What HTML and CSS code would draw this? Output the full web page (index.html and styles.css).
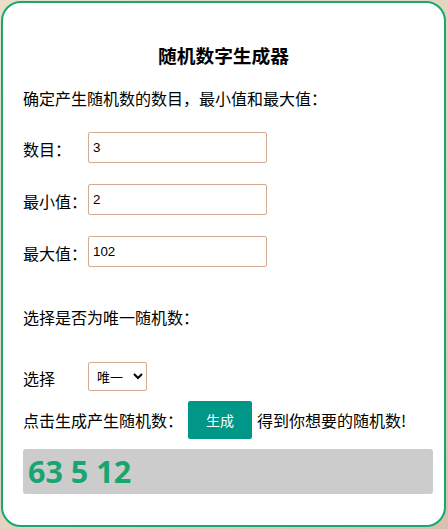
FILE: index.html
```html
<!DOCTYPE html>
<html lang="zh-CN">
<head>
<meta charset="utf-8">
<title>随机数字生成器</title>
<link rel="stylesheet" href="styles.css">
</head>
<body>
<div class="card">
  <h3 class="title">随机数字生成器</h3>
  <p class="intro">确定产生随机数的数目，最小值和最大值：</p>
  <div class="fields">
    <div class="row"><label class="label">数目：</label><input class="field" type="text" value="3"></div>
    <div class="row"><label class="label">最小值：</label><input class="field" type="text" value="2"></div>
    <div class="row"><label class="label">最大值：</label><input class="field" type="text" value="102"></div>
  </div>
  <p class="intro unique-q">选择是否为唯一随机数：</p>
  <div class="row select-row"><label class="label">选择</label><select class="picker"><option>唯一</option><option>不唯一</option></select></div>
  <div class="gen-row"><span>点击生成产生随机数：</span><button class="gen-btn" type="button">生成</button><span>得到你想要的随机数!</span></div>
  <div class="result">63 5 12</div>
</div>
</body>
</html>
```
FILE: styles.css
```css
html, body {
  margin: 0;
  padding: 0;
}
body {
  padding: 1px;
  min-height: 529px;
  box-sizing: border-box;
  background: linear-gradient(135deg, #ebdfc8 0%, #e2d2be 60%, #d8c0b1 100%);
  font-family: "Noto Sans CJK SC", "Noto Sans", sans-serif;
  color: #000;
}
.card {
  width: 445px;
  height: 526px;
  box-sizing: border-box;
  border: 2px solid #17a872;
  border-radius: 20px;
  background: #fff;
  padding: 38px 0 0 20px;
}
.title {
  margin: 0 0 18px;
  font-size: 18.72px;
  line-height: 27px;
  font-weight: bold;
  text-align: center;
  padding-right: 20px;
}
.intro {
  margin: 0;
  font-size: 16px;
  line-height: 24px;
}
.fields {
  margin-top: 22px;
  display: flex;
  flex-direction: column;
  gap: 21px;
}
.row {
  display: flex;
  align-items: center;
  font-size: 16px;
}
.label {
  width: 65px;
  line-height: 24px;
  padding-top: 2px;
}
.field {
  width: 179px;
  height: 31px;
  box-sizing: border-box;
  border: 1px solid #d3aa93;
  border-radius: 2px;
  padding: 0 3px 0 4px;
  margin: 0;
  font-family: "Liberation Sans", Arial, sans-serif;
  font-size: 13.33px;
  color: #000;
  outline: none;
}
.unique-q {
  margin-top: 38px;
}
.select-row {
  margin-top: 33px;
}
.picker {
  width: 59px;
  height: 29px;
  box-sizing: border-box;
  border: 1px solid #d3aa93;
  border-radius: 2px;
  background: #fff;
  margin: 0;
  padding: 0 2px 0 4px;
  font-family: "Noto Sans CJK SC", sans-serif;
  font-size: 13px;
  color: #000;
}
.gen-row {
  margin-top: 10px;
  display: flex;
  align-items: center;
  gap: 5px;
  font-size: 16px;
  line-height: 24px;
}
.gen-btn {
  height: 38px;
  width: 64px;
  margin: 0;
  border: none;
  border-radius: 2px;
  background: #009688;
  color: #fff;
  font-family: "Noto Sans CJK SC", sans-serif;
  font-size: 14px;
  padding: 0;
}
.result {
  margin-top: 10px;
  width: 410px;
  height: 45px;
  box-sizing: border-box;
  background: #cccccc;
  border-radius: 3px;
  padding-left: 5px;
  font-family: "Noto Sans", "Noto Sans CJK SC", sans-serif;
  font-weight: bold;
  font-size: 30.5px;
  line-height: 45px;
  color: #18a571;
}
```
